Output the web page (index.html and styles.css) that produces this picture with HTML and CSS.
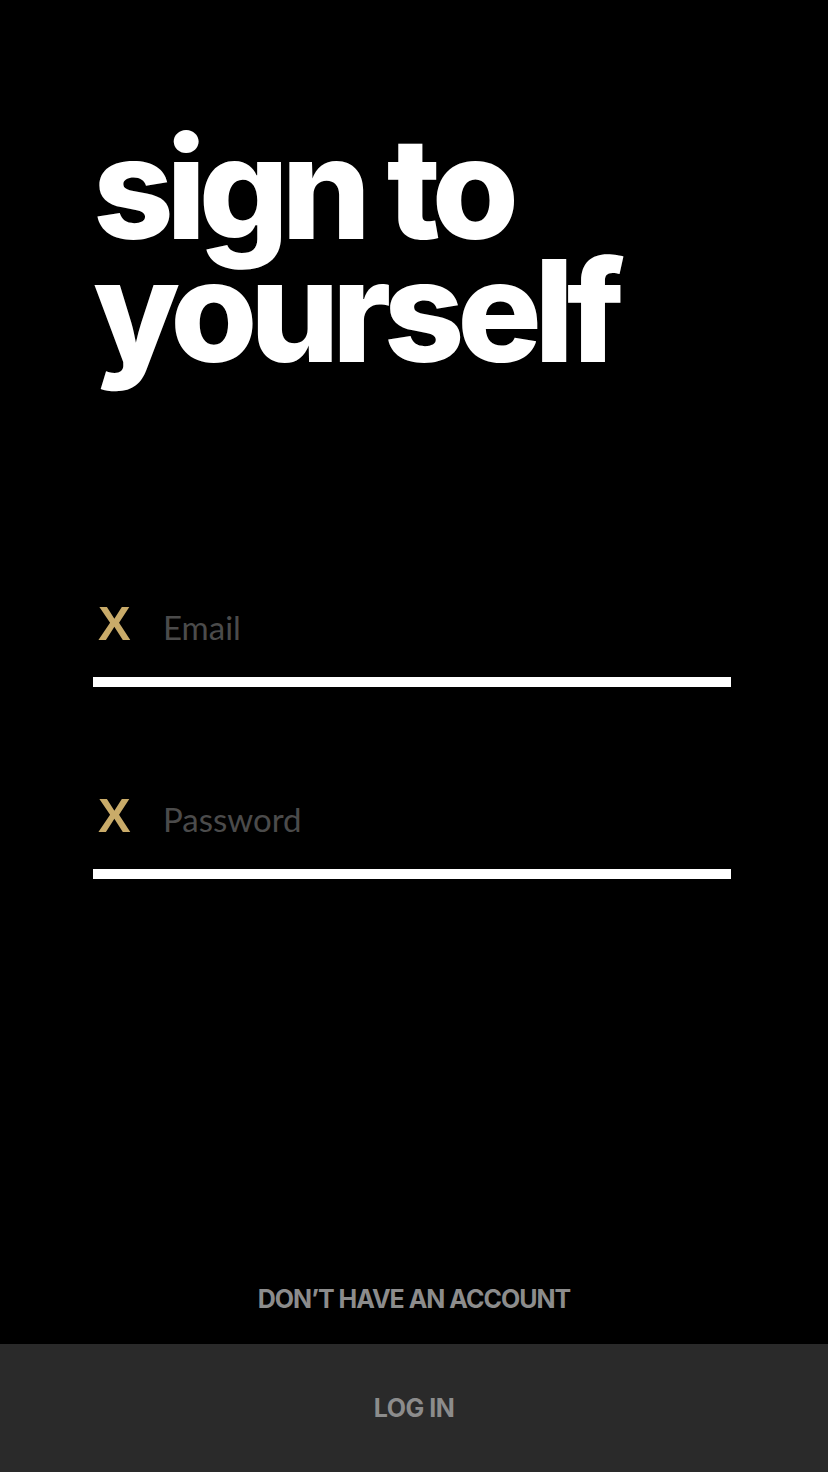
FILE: index.html
```html
<!DOCTYPE html>
<html lang="en">
<head>
  <meta charset="UTF-8">
  <meta name="viewport" content="width=device-width, initial-scale=1.0">
  <title>Sign in</title>
  <link rel="stylesheet" href="styles.css">
</head>
<body>
  <div class="screen">
    <h1 class="title">sign to<br>yourself</h1>

    <form class="form">
      <label class="field">
        <span class="field-icon">X</span>
        <input type="email" placeholder="Email">
      </label>
      <label class="field field-password">
        <span class="field-icon">X</span>
        <input type="password" placeholder="Password">
      </label>
    </form>

    <a class="signup-link" href="#">DON’T HAVE AN ACCOUNT</a>
    <button class="login-button" type="button">LOG IN</button>
  </div>
</body>
</html>
```

FILE: styles.css
```css
html, body {
  margin: 0;
  padding: 0;
  background: #000;
}

.screen {
  display: flex;
  flex-direction: column;
  min-height: 1472px;
  box-sizing: border-box;
}

.title {
  margin: 0;
  padding: 126px 0 0 93px;
  font-family: Inter, sans-serif;
  font-weight: 800;
  font-size: 141px;
  line-height: 123px;
  letter-spacing: -7.5px;
  color: #fff;
}

.form {
  padding: 221px 97px 0 93px;
}

.field {
  display: flex;
  align-items: baseline;
  height: 94px;
  padding-top: 6px;
  box-sizing: border-box;
  border-bottom: 10px solid #fff;
}

.field-password {
  margin-top: 98px;
}

.field-icon {
  width: 70px;
  padding-left: 5px;
  box-sizing: border-box;
  font-family: "Liberation Sans", sans-serif;
  font-weight: 700;
  font-size: 49px;
  line-height: 1;
  color: #c9ab69;
}

.field input {
  flex: 1;
  background: transparent;
  border: none;
  outline: none;
  padding: 0;
  font-family: Lato, sans-serif;
  font-size: 33px;
  color: #fff;
}

.field input::placeholder {
  color: #4b4b4b;
}

.signup-link {
  margin-top: auto;
  padding-bottom: 30px;
  text-align: center;
  font-family: Inter, sans-serif;
  font-weight: 700;
  font-size: 25px;
  letter-spacing: -1px;
  color: #8c8c8c;
  text-decoration: none;
}

.login-button {
  height: 128px;
  border: none;
  background: #2a2a2a;
  font-family: Inter, sans-serif;
  font-weight: 700;
  font-size: 25px;
  letter-spacing: -0.5px;
  color: #8c8c8c;
  cursor: pointer;
}
```
